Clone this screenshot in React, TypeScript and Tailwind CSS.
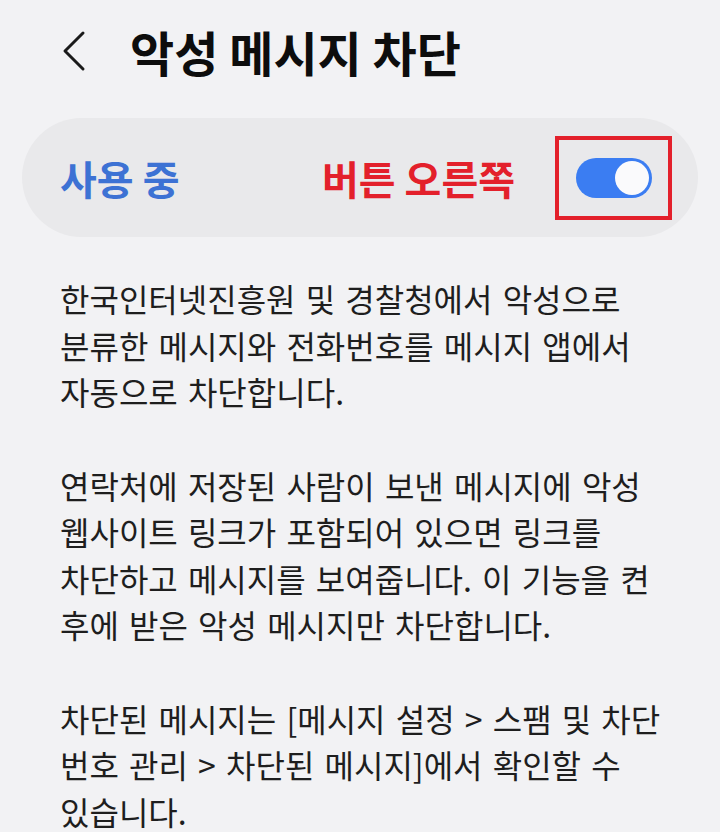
import React from 'react';

const paragraphs: string[][] = [
  [
    '한국인터넷진흥원 및 경찰청에서 악성으로',
    '분류한 메시지와 전화번호를 메시지 앱에서',
    '자동으로 차단합니다.',
  ],
  [
    '연락처에 저장된 사람이 보낸 메시지에 악성',
    '웹사이트 링크가 포함되어 있으면 링크를',
    '차단하고 메시지를 보여줍니다. 이 기능을 켠',
    '후에 받은 악성 메시지만 차단합니다.',
  ],
  [
    '차단된 메시지는 [메시지 설정 > 스팸 및 차단',
    '번호 관리 > 차단된 메시지]에서 확인할 수',
    '있습니다.',
  ],
];

const Toggle = ({ on }: { on: boolean }) => (
  <div
    className={`flex h-[40px] w-[76px] items-center rounded-full px-[3px] ${
      on ? 'justify-end bg-[#3b7df2]' : 'justify-start bg-[#b8b8bc]'
    }`}
  >
    <div className="h-[34px] w-[34px] rounded-full bg-[#fafafc]" />
  </div>
);

export default function App() {
  return (
    <div className="h-[832px] w-[720px] overflow-hidden bg-[#f2f2f4] font-['Noto_Sans_CJK_KR',sans-serif] text-[#1e1e1e]">
      {/* top bar */}
      <header className="flex h-[102px] items-center">
        <div className="flex w-[130px] justify-start pl-[60px]">
          <svg width="28" height="42" viewBox="0 0 28 42" fill="none">
            <path
              d="M23 3 L5 21 L23 39"
              stroke="#1a1a1a"
              strokeWidth="3"
              strokeLinecap="round"
              strokeLinejoin="round"
            />
          </svg>
        </div>
        <h1 className="text-[48px] font-bold leading-none text-[#0d0d0d]">악성 메시지 차단</h1>
      </header>

      {/* master switch */}
      <div className="mx-[22px] mt-[16px] flex h-[119px] items-center rounded-full bg-[#e9e9eb] pl-[38px] pr-[26px]">
        <span className="text-[40px] font-bold leading-none text-[#3d72d4]">사용 중</span>
        <span className="ml-auto text-[40px] font-bold leading-none text-[#e3202b]">
          버튼 오른쪽
        </span>
        <div className="ml-[40px] flex h-[84px] w-[117px] items-center justify-center border-4 border-[#e3202b]">
          <Toggle on />
        </div>
      </div>

      {/* description */}
      <div className="mt-[38px] flex flex-col gap-[47px] px-[60px] text-[32px] leading-[46.5px] [word-spacing:3px]">
        {paragraphs.map((lines, i) => (
          <p key={i}>
            {lines.map((line, j) => (
              <span key={j} className="block whitespace-nowrap">
                {line}
              </span>
            ))}
          </p>
        ))}
      </div>
    </div>
  );
}
